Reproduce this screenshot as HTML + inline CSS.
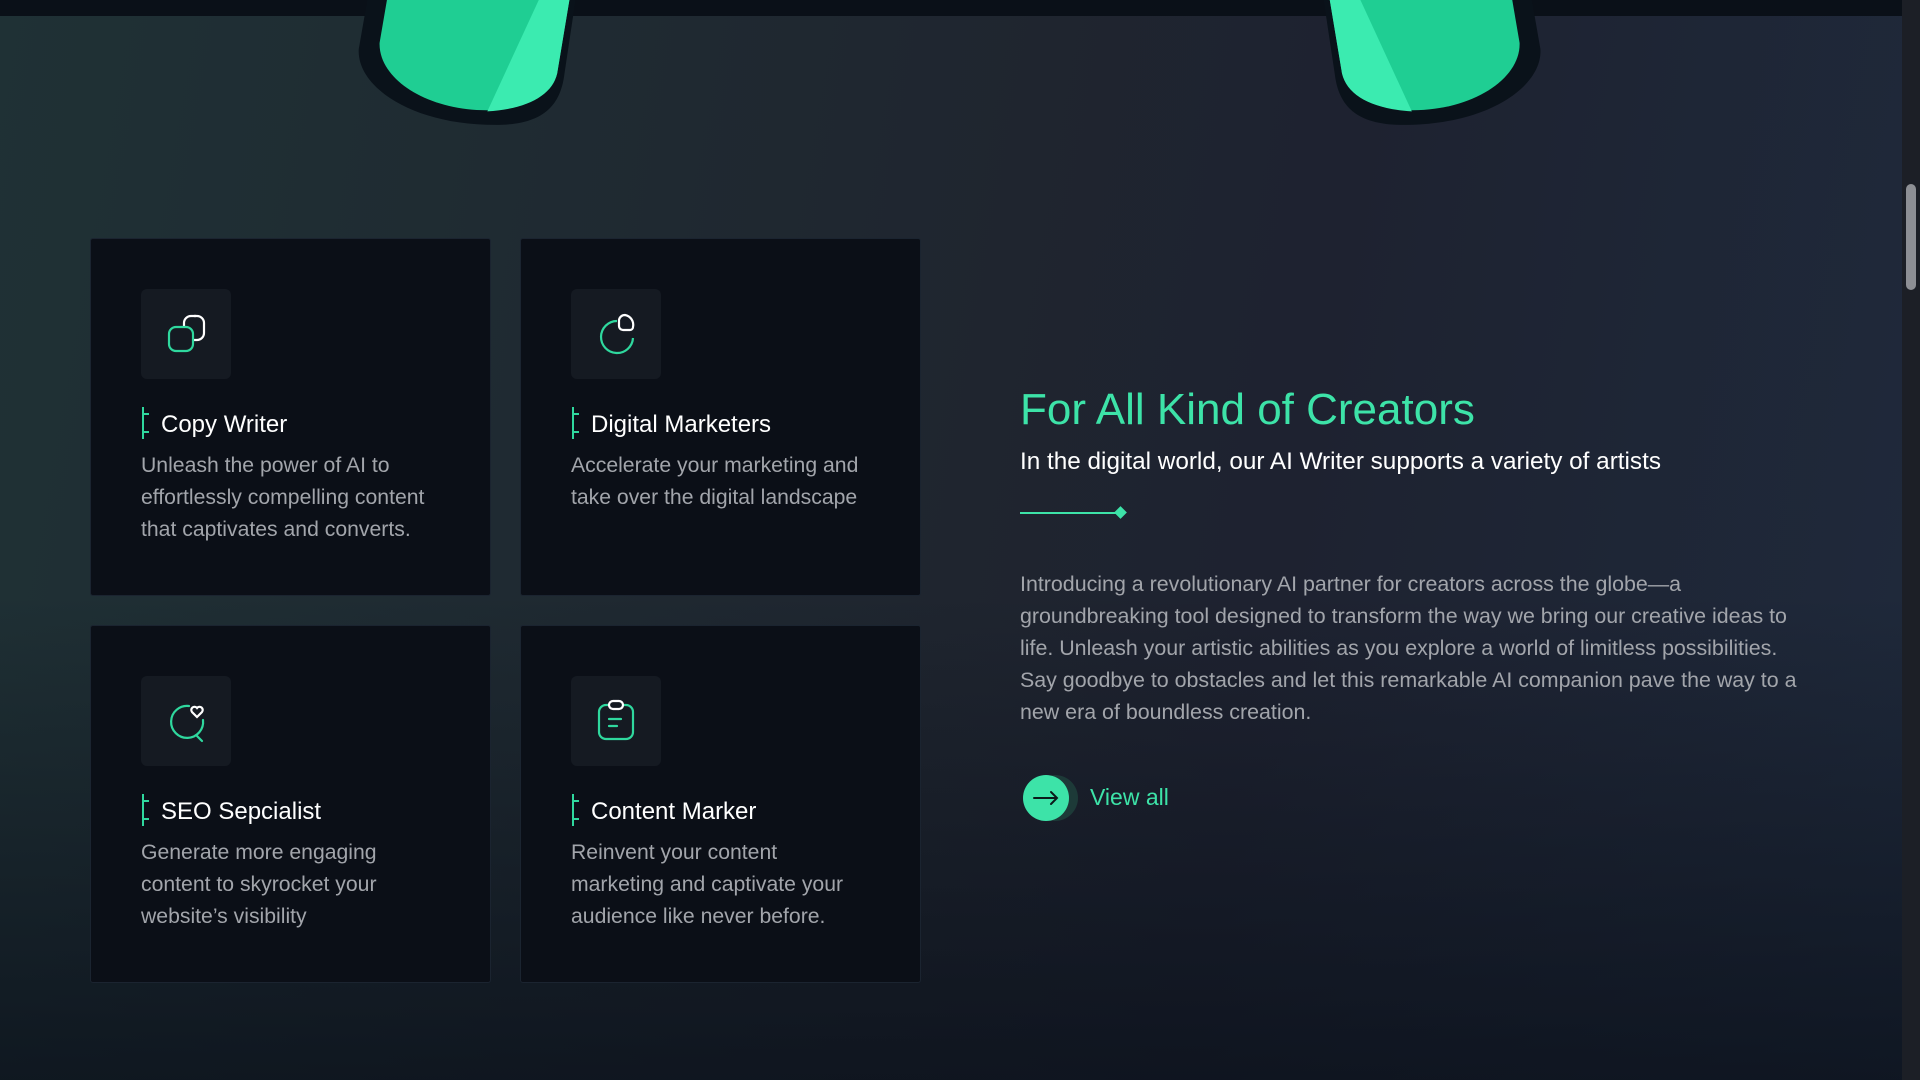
<!DOCTYPE html>
<html><head><meta charset="utf-8"><style>
*{margin:0;padding:0;box-sizing:border-box}
body{width:1920px;height:1080px;overflow:hidden;font-family:"Liberation Sans",sans-serif;
background:linear-gradient(180deg,rgba(10,14,22,0) 55%,rgba(10,16,26,.75) 100%),linear-gradient(100deg,#1f3135 0%,#1f252f 50%,#1e2230 65%,#1f2a3c 100%);position:relative}
.topbar{position:absolute;left:0;top:0;width:1902px;height:16px;background:#0a1018}
.legs{position:absolute;left:0;top:0;width:1920px;height:1080px}
.card{position:absolute;width:401px;height:358px;background:#0b0f17;border:1px solid #1b2430;border-radius:3px}
.ib{position:absolute;left:50px;top:50px;width:90px;height:90px;background:#151a22;border-radius:6px}
.ib svg{position:absolute;left:0;top:0}
.t{position:absolute;left:70px;top:172px;font-size:24px;color:#fff}
.bar{position:absolute;left:51px;top:168px;width:3px;height:32px;border-left:2px solid #2fd89e}
.bar:before,.bar:after{content:"";position:absolute;left:0;width:5px;height:2px;background:#2fd89e}
.bar:before{top:6px}.bar:after{bottom:6px}
.d{position:absolute;left:50px;top:211px;width:298px;font-size:21.2px;line-height:32px;color:#a2a5ab}
h2{position:absolute;left:1020px;top:385px;font-size:44px;font-weight:400;color:#3de3a8}
.sub{position:absolute;left:1020px;top:448px;font-size:24.3px;color:#fff}
.line{position:absolute;left:1020px;top:512px;width:100px;height:2px;background:#3de3a8}
.dia{position:absolute;left:1116px;top:508px;width:9px;height:9px;background:#3de3a8;transform:rotate(45deg)}
.p{position:absolute;left:1020px;top:568px;width:785px;font-size:21.4px;line-height:32px;color:#a2a5ab}
.c2{position:absolute;left:1032px;top:775px;width:46px;height:46px;border-radius:50%;background:#1d3a38}
.c1{position:absolute;left:1023px;top:775px;width:46px;height:46px;border-radius:50%;background:#3de3a8}
.va{position:absolute;left:1090px;top:784px;font-size:23px;color:#3de3a8}
.sb{position:absolute;right:0;top:0;width:18px;height:1080px;background:#1c1f26}
.thumb{position:absolute;right:4px;top:184px;width:10px;height:106px;background:#8d8f94;border-radius:5px}
</style></head><body>
<div class="topbar"></div>
<svg class="legs" viewBox="0 0 1568 882" width="1920" height="1080">
<g id="leg">
<path d="M300,0 L293,40 C291,70 335,102 405,102 C445,102 458,85 461,60 L470,0 Z" fill="#0a121a"/>
<path d="M316,0 L310,35 C309,65 350,91 400,90 C430,89 450,78 455,60 L465,0 Z" fill="#1fce93"/>
<path d="M440,0 L465,0 L455,60 C451,78 430,89 398,91 Z" fill="#3bebb0"/>
</g>
<use href="#leg" transform="translate(1551,0) scale(-1,1)"/>
</svg>

<div class="card" style="left:90px;top:238px">
<div class="ib"><svg width="90" height="90" viewBox="0 0 90 90" fill="none" stroke-width="2.2"><path d="M53,27 h3 a7,7 0 0 1 7,7 v10 a7,7 0 0 1 -7,7 h-4" stroke="#fff"/><path d="M43,38 v-4 a7,7 0 0 1 7,-7 h5" stroke="#fff"/><rect x="28" y="38" width="24" height="24" rx="7" stroke="#2fd89e"/></svg></div>
<div class="bar"></div><div class="t">Copy Writer</div>
<div class="d">Unleash the power of AI to effortlessly compelling content that captivates and converts.</div></div>

<div class="card" style="left:520px;top:238px">
<div class="ib"><svg width="90" height="90" viewBox="0 0 90 90" fill="none" stroke-width="2.2"><path d="M46,32 A16,16 0 1 0 62,49" stroke="#2fd89e"/><path d="M48,31 a6,6 0 0 1 6,-5 a10,10 0 0 1 8,12 a3,3 0 0 1 -3,3 h-7 a4,4 0 0 1 -4,-4 Z" stroke="#fff"/></svg></div>
<div class="bar"></div><div class="t">Digital Marketers</div>
<div class="d">Accelerate your marketing and take over the digital landscape</div></div>

<div class="card" style="left:90px;top:625px">
<div class="ib"><svg width="90" height="90" viewBox="0 0 90 90" fill="none" stroke-width="2.2" stroke-linecap="round"><path d="M48,30 A16,16 0 1 0 62,44" stroke="#2fd89e"/><path d="M56,60 l5,5" stroke="#2fd89e"/><path d="M56,41 l-5,-5 a3,3 0 0 1 5,-4 a3,3 0 0 1 5,4 Z" stroke="#fff"/></svg></div>
<div class="bar"></div><div class="t">SEO Sepcialist</div>
<div class="d">Generate more engaging content to skyrocket your website’s visibility</div></div>

<div class="card" style="left:520px;top:625px">
<div class="ib"><svg width="90" height="90" viewBox="0 0 90 90" fill="none" stroke-width="2.2" stroke-linecap="round"><path d="M38,29 h-3 a7,7 0 0 0 -7,7 v20 a7,7 0 0 0 7,7 h20 a7,7 0 0 0 7,-7 v-20 a7,7 0 0 0 -7,-7 h-3" stroke="#2fd89e"/><rect x="38" y="25" width="14" height="8" rx="4" stroke="#fff"/><path d="M38,43 h12 M38,50 h8" stroke="#2fd89e"/></svg></div>
<div class="bar"></div><div class="t">Content Marker</div>
<div class="d">Reinvent your content marketing and captivate your audience like never before.</div></div>

<h2>For All Kind of Creators</h2>
<div class="sub">In the digital world, our AI Writer supports a variety of artists</div>
<div class="line"></div><div class="dia"></div>
<div class="p">Introducing a revolutionary AI partner for creators across the globe—a groundbreaking tool designed to transform the way we bring our creative ideas to life. Unleash your artistic abilities as you explore a world of limitless possibilities. Say goodbye to obstacles and let this remarkable AI companion pave the way to a new era of boundless creation.</div>
<div class="c2"></div><div class="c1"><svg width="46" height="46" viewBox="0 0 46 46" fill="none" stroke="#0b1a1a" stroke-width="2" stroke-linecap="round"><path d="M11,23 h23 M28,17 l6,6 l-6,6"/></svg></div>
<div class="va">View all</div>
<div class="sb"><div class="thumb"></div></div>
</body></html>
